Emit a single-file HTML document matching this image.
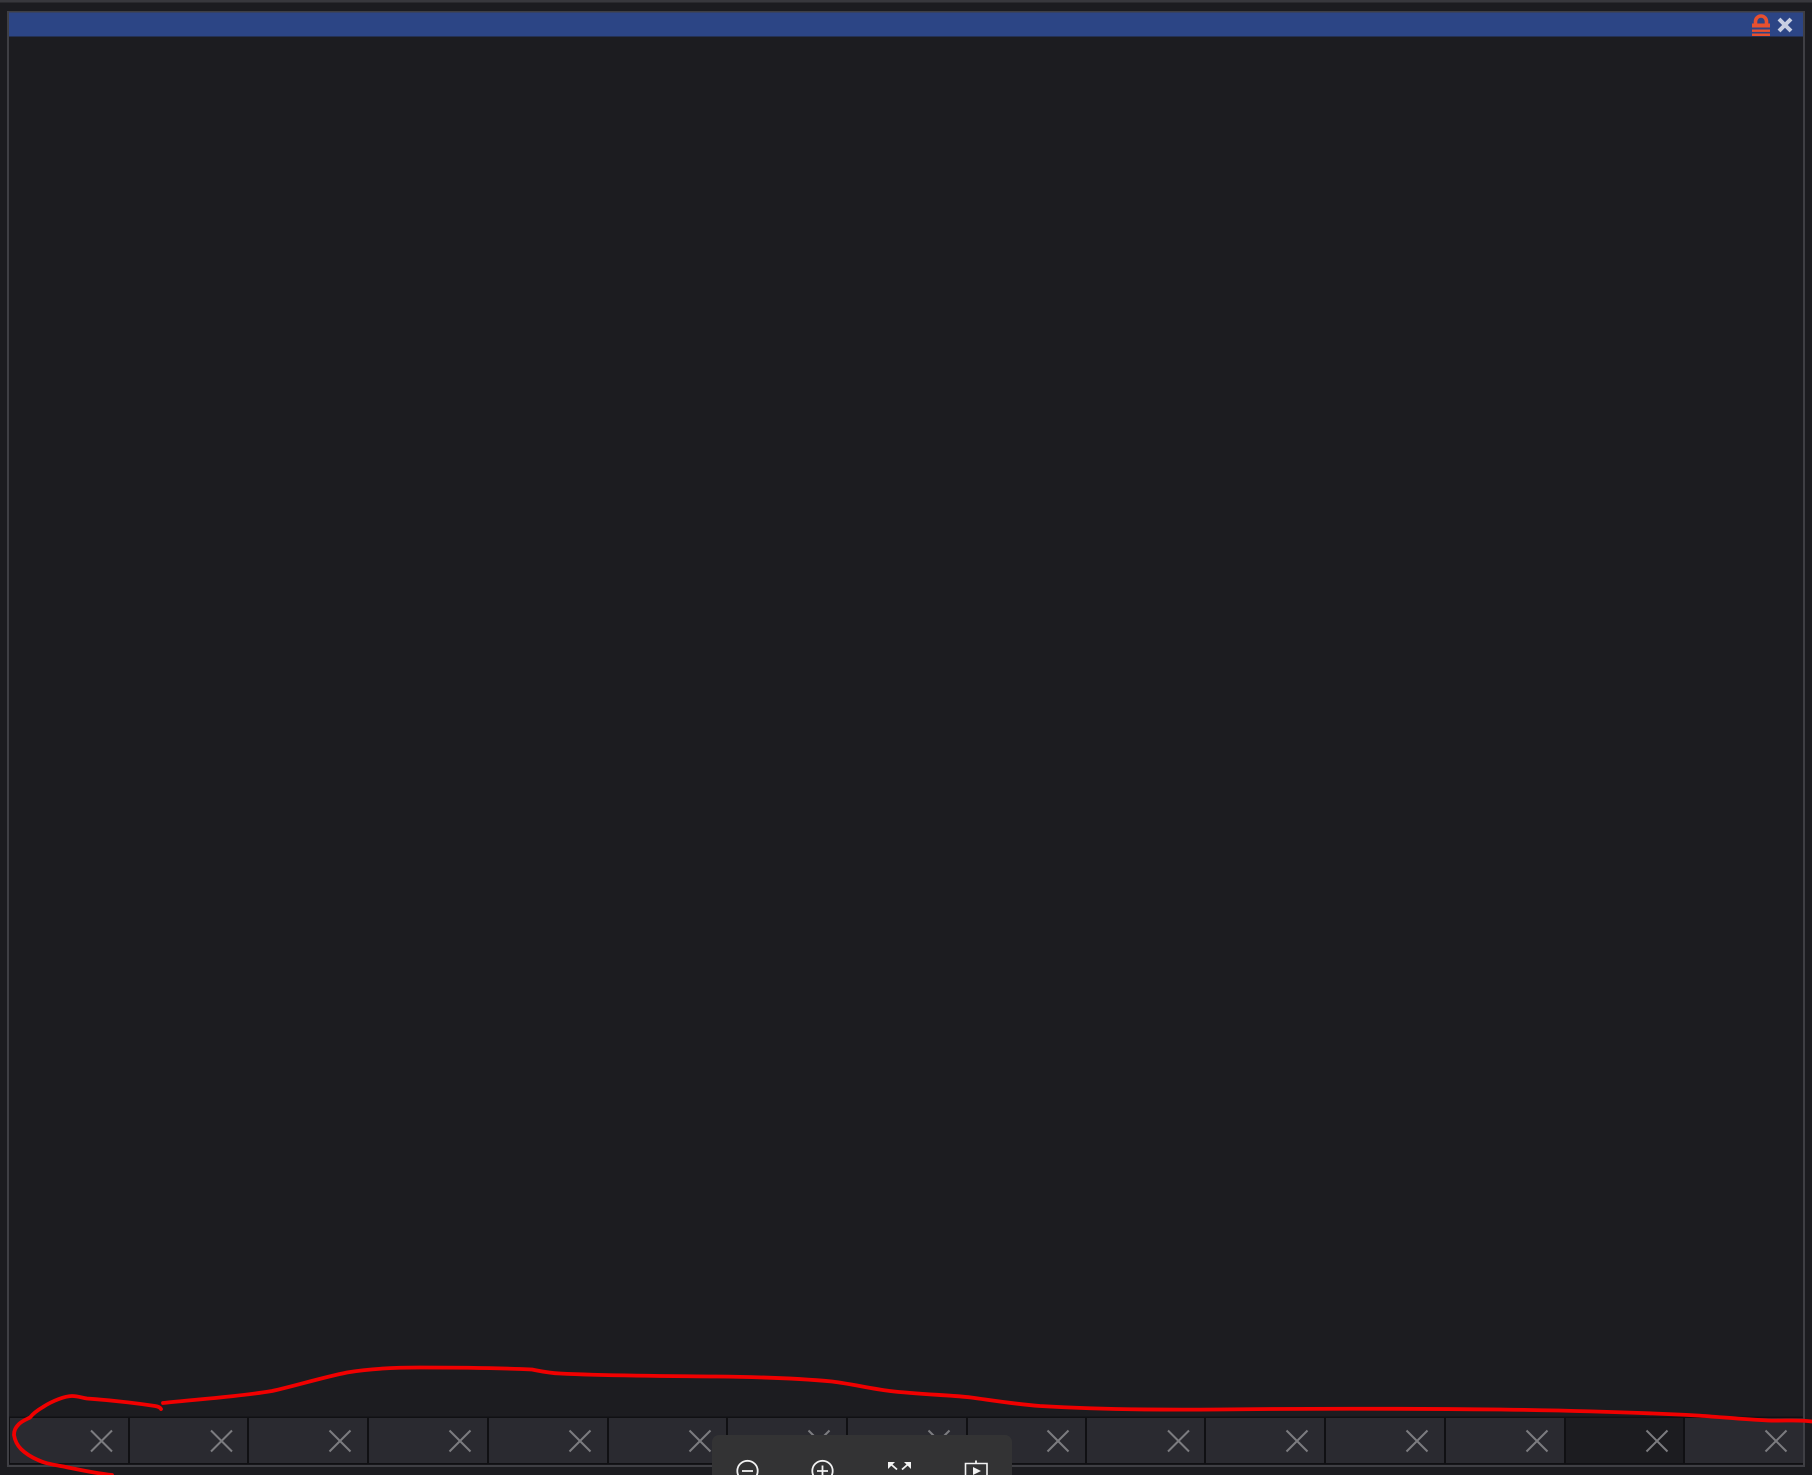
<!DOCTYPE html>
<html>
<head>
<meta charset="utf-8">
<style>
html,body{margin:0;padding:0;background:#1c1c20;width:1812px;height:1475px;overflow:hidden}
svg{display:block}
</style>
</head>
<body>
<svg width="1812" height="1475" viewBox="0 0 1812 1475" xmlns="http://www.w3.org/2000/svg">
<rect width="1812" height="1475" fill="#1c1c20"/>
<rect x="0" y="0" width="1812" height="2.500" fill="#38383d"/>
<rect x="7" y="11" width="2" height="1456" fill="#3f3f44"/>
<rect x="1803" y="11" width="2" height="1456" fill="#3f3f44"/>
<rect x="7" y="11" width="1798" height="1.500" fill="#3f3f44"/>
<rect x="9" y="12.500" width="1794" height="24" fill="#2c4585"/>
<rect x="7" y="1465" width="1798" height="2" fill="#3f3f44"/>

<rect x="9" y="1416.500" width="1794" height="48" fill="#101013"/>
<g fill="#2a2a30">
<rect x="10" y="1418" width="118" height="45"/>
<rect x="130" y="1418" width="117" height="45"/>
<rect x="249" y="1418" width="118" height="45"/>
<rect x="369" y="1418" width="118" height="45"/>
<rect x="489" y="1418" width="118" height="45"/>
<rect x="609" y="1418" width="117" height="45"/>
<rect x="728" y="1418" width="118" height="45"/>
<rect x="848" y="1418" width="118" height="45"/>
<rect x="968" y="1418" width="117" height="45"/>
<rect x="1087" y="1418" width="117" height="45"/>
<rect x="1206" y="1418" width="118" height="45"/>
<rect x="1326" y="1418" width="118" height="45"/>
<rect x="1446" y="1418" width="118" height="45"/>
<rect x="1566" y="1418" width="117" height="45" fill="#1c1c20"/>
<rect x="1685" y="1418" width="118" height="45"/>
</g>
<g stroke="#7c7c80" stroke-width="2" fill="none">
<path d="M91 1430.500L112 1451.500M112 1430.500L91 1451.500"/>
<path d="M211 1430.500L232 1451.500M232 1430.500L211 1451.500"/>
<path d="M329.500 1430.500L350.500 1451.500M350.500 1430.500L329.500 1451.500"/>
<path d="M449.500 1430.500L470.500 1451.500M470.500 1430.500L449.500 1451.500"/>
<path d="M569.500 1430.500L590.500 1451.500M590.500 1430.500L569.500 1451.500"/>
<path d="M689.500 1430.500L710.500 1451.500M710.500 1430.500L689.500 1451.500"/>
<path d="M808.500 1430.500L829.500 1451.500M829.500 1430.500L808.500 1451.500"/>
<path d="M928.500 1430.500L949.500 1451.500M949.500 1430.500L928.500 1451.500"/>
<path d="M1047.500 1430.500L1068.500 1451.500M1068.500 1430.500L1047.500 1451.500"/>
<path d="M1168 1430.500L1189 1451.500M1189 1430.500L1168 1451.500"/>
<path d="M1286.500 1430.500L1307.500 1451.500M1307.500 1430.500L1286.500 1451.500"/>
<path d="M1406.500 1430.500L1427.500 1451.500M1427.500 1430.500L1406.500 1451.500"/>
<path d="M1526.500 1430.500L1547.500 1451.500M1547.500 1430.500L1526.500 1451.500"/>
<path d="M1646.500 1430.500L1667.500 1451.500M1667.500 1430.500L1646.500 1451.500"/>
<path d="M1765.500 1430.500L1786.500 1451.500M1786.500 1430.500L1765.500 1451.500"/>
</g>

<g fill="#e8502f">
<path d="M1755.500 25V21.500a5.500 5.500 0 0 1 11 0V25" fill="none" stroke="#e8502f" stroke-width="3.600"/>
<rect x="1752" y="23.500" width="18" height="4"/>
<rect x="1752" y="29.500" width="18" height="2.400"/>
<rect x="1752" y="33.500" width="18" height="2.500"/>
</g>
<path d="M1779 19L1791 31M1791 19L1779 31" stroke="#c8cfe2" stroke-width="4" fill="none"/>

<rect x="712" y="1435" width="300" height="60" rx="7" fill="#333334"/>
<g stroke="#f2f2f2" stroke-width="1.800" fill="none">
<circle cx="747.500" cy="1471" r="10.200"/>
<path d="M742 1471H753"/>
<circle cx="822.500" cy="1471" r="10.200"/>
<path d="M817 1471H828M822.500 1465.500V1476.500"/>
<path d="M889 1462.500L897 1469.500M910 1462.500L902 1469.500"/>
<path d="M965.500 1463.500H987V1480H965.500Z" stroke-width="1.600"/>
<path d="M976 1460.500V1463.500"/>
</g>
<g fill="#f2f2f2">
<path d="M888 1462H895L888 1469Z"/>
<path d="M911 1462H904L911 1469Z"/>
<path d="M973 1467L981 1471L973 1475Z"/>
</g>

<g stroke="#f00000" stroke-width="3.800" fill="none" stroke-linecap="round" stroke-linejoin="round">
<path d="M161 1409C160 1407 158 1406.500 155 1406C135 1403 108 1400 87 1398.500C82 1397.800 78 1396 72 1396C65 1396 52 1401 43 1407C37 1410.500 33 1413.500 30 1417.500C26 1419.500 22 1421 19 1424C15 1428 14 1431 14 1435C15 1441 17 1445 21 1449C26 1454 31 1457 38 1460C44 1463 50 1464 58 1465.500C72 1468 92 1473 112 1475"/>
<path d="M163 1403C195 1399.500 240 1396.500 272 1391C295 1386 320 1378 347 1372.500C370 1368.500 395 1367.500 420 1367.500C460 1367.500 500 1368 532 1369.500C540 1371 548 1373 560 1373.500C610 1376 670 1376 716 1376.500C765 1377 800 1378.500 832 1381.500C852 1384 870 1388.500 890 1391C920 1394.500 950 1395 971 1397.500C990 1400 1010 1403.500 1040 1406C1090 1409 1160 1410 1217 1409.500C1300 1408.500 1400 1408.500 1500 1409.500C1570 1410.500 1640 1412.500 1697 1415.500C1720 1417 1745 1419.500 1768 1420.500C1785 1421 1800 1419.500 1812 1421.500"/>
</g>
</svg>
</body>
</html>
